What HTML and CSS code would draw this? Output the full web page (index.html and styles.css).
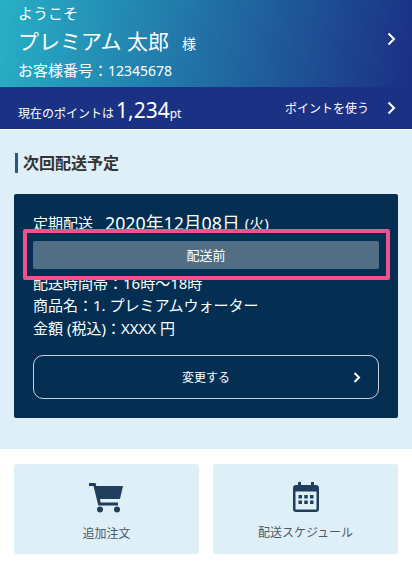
FILE: index.html
```html
<!DOCTYPE html>
<html lang="ja">
<head>
    <meta charset="UTF-8">
    <meta name="viewport" content="width=device-width, initial-scale=1.0">
    <title>マイページ</title>
    <link rel="stylesheet" href="styles.css">
</head>
<body>
    <a class="user_head" href="#">
        <div>
            <p class="welcome">ようこそ</p>
            <p class="user_name">プレミアム 太郎<span class="sama">様</span></p>
            <p class="user_no">お客様番号：<span class="user_num">12345678</span></p>
        </div>
        <svg class="arrow" width="9" height="14" viewBox="0 0 9 14"><path d="M1.5 1.5 7 7l-5.5 5.5" fill="none" stroke="#fff" stroke-width="2"/></svg>
    </a>
    <a class="point_bar" href="#">
        <p class="point_now">現在のポイントは<span class="point_num">1,234</span><span class="point_unit">pt</span></p>
        <div class="point_use">
            <span>ポイントを使う</span>
            <svg width="9" height="14" viewBox="0 0 9 14"><path d="M1.5 1.5 7 7l-5.5 5.5" fill="none" stroke="#fff" stroke-width="2"/></svg>
        </div>
    </a>

    <section class="next_section">
        <h2 class="subtitle">次回配送予定</h2>
        <div class="next_card">
            <p class="next_date"><span class="date_label">定期配送</span><span class="date_val">2020年12月08日</span> <span class="date_week">(火)</span></p>
            <div class="status">
                配送前
                <div class="status_mark"></div>
            </div>
            <p class="next_line first_line">配送時間帯：16時～18時</p>
            <p class="next_line">商品名：1. プレミアムウォーター</p>
            <p class="next_line">金額 (税込)：XXXX 円</p>
            <a class="change_btn" href="#">
                変更する
                <svg class="change_arrow" width="8" height="11" viewBox="0 0 8 11"><path d="M1.5 1 6 5.5 1.5 10" fill="none" stroke="#fff" stroke-width="2"/></svg>
            </a>
        </div>
    </section>

    <nav class="menu">
        <a class="menu_item" href="#">
            <svg width="35" height="31" viewBox="0 0 35 31"><path d="M0 1h6.500l.8 3H34l-3 13H11l.7 3.500H29V23.500H9.300L4.500 4H0z" fill="#213f5c"/><circle cx="11" cy="27.500" r="3" fill="#213f5c"/><circle cx="28" cy="27.500" r="3" fill="#213f5c"/></svg>
            <span>追加注文</span>
        </a>
        <a class="menu_item" href="#">
            <svg width="26" height="30" viewBox="0 0 26 30"><path d="M5 0h3v3h10V0h3v3h2a3 3 0 0 1 3 3v21a3 3 0 0 1-3 3H3a3 3 0 0 1-3-3V6a3 3 0 0 1 3-3h2z" fill="#213f5c"/><rect x="2.500" y="9.500" width="21" height="18" fill="#dfeff8"/><path d="M5.500 13h3.500v3.500H5.500zm5.750 0h3.500v3.500h-3.500zm5.750 0h3.500v3.500H17zM5.500 18.500h3.500V22H5.500zm5.750 0h3.500V22h-3.500zm5.750 0h3.500V22H17z" fill="#213f5c"/></svg>
            <span>配送スケジュール</span>
        </a>
    </nav>
</body>
</html>
```

FILE: styles.css
```css
* { box-sizing: border-box; }
body { margin: 0; font-family: "Noto Sans", "Noto Sans CJK JP", sans-serif; color: #333; background: #fff; }
p, h2 { margin: 0; }
a { color: inherit; text-decoration: none; }

.user_head { height: 87px; padding: 3px 16px 0 18px; display: flex; justify-content: space-between; align-items: flex-start; color: #fff; background: linear-gradient(100deg, #27b0c6 0%, #1b2f84 100%); }
.user_head .arrow { margin-top: 29px; }
.welcome { font-size: 15px; line-height: 20px; }
.user_name { font-size: 21px; line-height: 30px; margin-top: 3px; }
.sama { font-size: 14px; margin-left: 13px; }
.user_no { font-size: 15px; line-height: 20px; margin-top: 1px; }
.user_num { font-size: 14px; }

.point_bar { height: 43px; padding: 0 16px 0 18px; display: flex; justify-content: space-between; align-items: center; color: #fff; background: #1b3183; border-bottom: 1px solid #fff; }
.point_now { font-size: 12px; line-height: 30px; margin-top: 7px; }
.point_num { font-size: 21px; margin-left: 2px; }
.point_unit { font-size: 12px; }
.point_use { display: flex; align-items: center; gap: 18px; font-size: 12px; }

.next_section { height: 319px; padding: 23px 14px 0; background: #dfeff8; }
.subtitle { height: 20px; padding-left: 5px; font-size: 16px; line-height: 20px; font-weight: 700; color: #333; border-left: 3px solid #2d5877; margin-left: 1px; }
.next_card { height: 224px; margin-top: 21px; padding: 10px 19px 0; color: #fff; background: #042f53; border-radius: 2px; }
.next_date { font-size: 15px; height: 36px; margin-bottom: 1px; display: flex; align-items: center; gap: 5px; }
.date_label { margin-right: 7px; }
.date_val { font-size: 17.8px; }
.status { position: relative; height: 28px; margin-bottom: 3px; font-size: 13px; line-height: 28px; text-align: center; background: #526e85; border-radius: 2px; }
.status_mark { position: absolute; inset: -12px -11px -11px -10px; border: 4px solid #f4508c; border-radius: 2px; }
.next_line { font-size: 15px; line-height: 23px; }
.first_line { line-height: 22px; }
.change_btn { position: relative; display: block; height: 44px; margin-top: 15px; font-size: 12px; line-height: 44px; text-align: center; border: 1px solid #c9d3dc; border-radius: 10px; }
.change_arrow { position: absolute; right: 17px; top: 16px; }

.menu { padding: 15px 14px 0; display: grid; grid-template-columns: 1fr 1fr; gap: 14px; }
.menu_item { height: 90px; padding-top: 18px; display: flex; flex-direction: column; align-items: center; background: #dfeff8; border-radius: 3px; font-size: 12px; color: #4a5a6a; }
.menu_item span { margin-top: 11px; line-height: 20px; }
```
